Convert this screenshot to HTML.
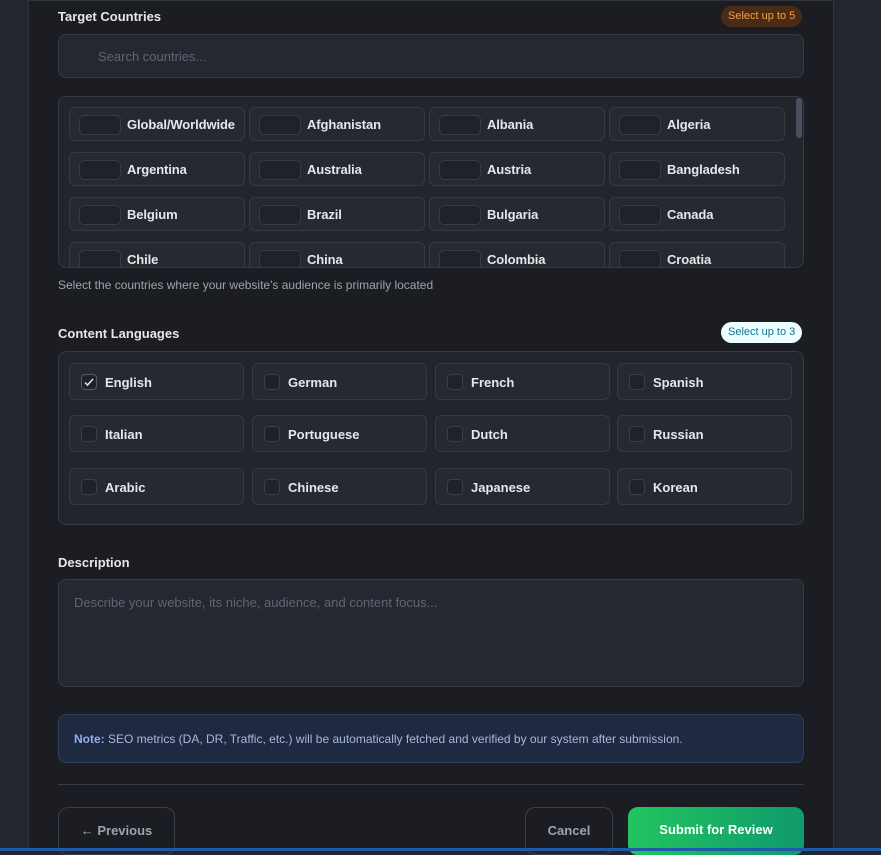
<!DOCTYPE html>
<html><head><meta charset="utf-8"><style>
*{box-sizing:border-box;margin:0;padding:0}
body{width:881px;height:851px;overflow:hidden;background:#23262d;font-family:"Liberation Sans",sans-serif;position:relative;color:#e5e7eb}
.panel{position:absolute;left:28px;top:0;width:806px;height:851px;background:#1b1d23;border-left:1px solid #30343c;border-right:1px solid #30343c;border-top:1px solid #30343c}
.abs{position:absolute}
.lbl{font-size:13px;font-weight:bold;color:#e5e7eb}
.badge{position:absolute;height:21px;border-radius:11px;font-size:11px;line-height:21px;padding:0 7px}
.box{position:absolute;border:1px solid #363a44;border-radius:8px;background:#22252c}
.c{position:absolute;width:176px;height:34px;border:1px solid #363a44;border-radius:6px;background:#262930;font-size:13px;font-weight:bold;color:#e5e7eb;line-height:34px;padding-left:57px;letter-spacing:-0.1px}
.c::before{content:"";position:absolute;left:9px;top:7px;width:40px;height:18px;border:1px solid #363a44;border-radius:5px;background:#1f2228}
.l{position:absolute;width:175px;height:37px;border:1px solid #363a44;border-radius:6px;background:#262930;font-size:13px;font-weight:bold;color:#e5e7eb;line-height:37px;padding-left:35px}
.l i{position:absolute;left:11px;top:10px;width:16px;height:16px;border:1px solid #3a3e48;border-radius:4px;background:#1f2228}
.btn{position:absolute;top:807px;height:48px;border:1px solid #3a3e48;border-radius:10px;font-size:13px;font-weight:bold;color:#9ca3af;text-align:center;line-height:46px}
</style></head><body>
<div class="panel"></div>
<div class="abs lbl" style="left:58px;top:9px">Target Countries</div>
<div class="badge" style="left:721px;top:6px;background:#4a2c16;color:#f59e4b">Select up to 5</div>
<div class="box" style="left:58px;top:34px;width:746px;height:44px;background:#252830;font-size:13px;color:#5f6573;line-height:44px;padding-left:39px;font-weight:normal">Search countries...</div>
<div class="box" style="left:58px;top:96px;width:746px;height:172px;overflow:hidden">
<div class="abs" style="left:737px;top:1px;width:6px;height:40px;background:#4b5060;border-radius:3px"></div>
<div class="c" style="left:10px;top:10px">Global/Worldwide</div><div class="c" style="left:190px;top:10px">Afghanistan</div><div class="c" style="left:370px;top:10px">Albania</div><div class="c" style="left:550px;top:10px">Algeria</div>
<div class="c" style="left:10px;top:55px">Argentina</div><div class="c" style="left:190px;top:55px">Australia</div><div class="c" style="left:370px;top:55px">Austria</div><div class="c" style="left:550px;top:55px">Bangladesh</div>
<div class="c" style="left:10px;top:100px">Belgium</div><div class="c" style="left:190px;top:100px">Brazil</div><div class="c" style="left:370px;top:100px">Bulgaria</div><div class="c" style="left:550px;top:100px">Canada</div>
<div class="c" style="left:10px;top:145px">Chile</div><div class="c" style="left:190px;top:145px">China</div><div class="c" style="left:370px;top:145px">Colombia</div><div class="c" style="left:550px;top:145px">Croatia</div>
</div>
<div class="abs" style="left:58px;top:278px;font-size:12px;color:#9ca3af">Select the countries where your website's audience is primarily located</div>
<div class="abs lbl" style="left:58px;top:326px">Content Languages</div>
<div class="badge" style="left:721px;top:322px;background:#ecfeff;color:#0e7490">Select up to 3</div>
<div class="box" style="left:58px;top:351px;width:746px;height:174px">
<div class="l" style="left:10px;top:11px"><i style="border-color:#555b66"><svg width="14" height="14" viewBox="0 0 14 14" style="position:absolute;left:0;top:0"><path d="M3 7.5l2.5 2.5L11 4" stroke="#e5e7eb" stroke-width="1.5" fill="none"/></svg></i>English</div>
<div class="l" style="left:193px;top:11px"><i></i>German</div><div class="l" style="left:376px;top:11px"><i></i>French</div><div class="l" style="left:558px;top:11px"><i></i>Spanish</div>
<div class="l" style="left:10px;top:63px"><i></i>Italian</div><div class="l" style="left:193px;top:63px"><i></i>Portuguese</div><div class="l" style="left:376px;top:63px"><i></i>Dutch</div><div class="l" style="left:558px;top:63px"><i></i>Russian</div>
<div class="l" style="left:10px;top:116px"><i></i>Arabic</div><div class="l" style="left:193px;top:116px"><i></i>Chinese</div><div class="l" style="left:376px;top:116px"><i></i>Japanese</div><div class="l" style="left:558px;top:116px"><i></i>Korean</div>
</div>
<div class="abs lbl" style="left:58px;top:555px">Description</div>
<div class="box" style="left:58px;top:579px;width:746px;height:108px;background:#252830;font-size:13px;color:#5f6573;padding:15px 0 0 15px">Describe your website, its niche, audience, and content focus...</div>
<div class="abs" style="left:58px;top:714px;width:746px;height:49px;background:#1f2a42;border:1px solid #2e3d5e;border-radius:8px;font-size:12px;color:#a8b8d8;line-height:48px;padding-left:15px"><b style="color:#8fb0e8">Note:</b> SEO metrics (DA, DR, Traffic, etc.) will be automatically fetched and verified by our system after submission.</div>
<div class="abs" style="left:58px;top:784px;width:746px;height:1px;background:#363a44"></div>
<div class="btn" style="left:58px;width:117px">← Previous</div>
<div class="btn" style="left:525px;width:88px">Cancel</div>
<div class="btn" style="left:628px;width:176px;border:none;background:linear-gradient(90deg,#22c55e,#0f9a6c);color:#fff">Submit for Review</div>
<div class="abs" style="left:0;top:848px;width:881px;height:3px;background:#1e5aa8"></div>
</body></html>
